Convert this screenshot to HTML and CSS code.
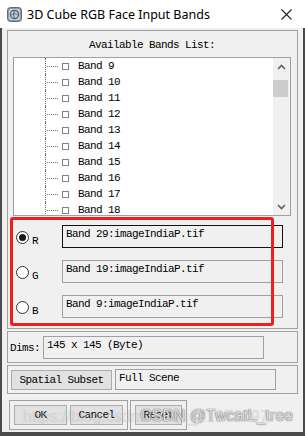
FILE: index.html
```html
<!DOCTYPE html>
<html lang="en">
<head>
    <meta charset="UTF-8">
    <title>3D Cube RGB Face Input Bands</title>
    <link rel="stylesheet" href="styles.css">
</head>
<body>

<div class="window">
    <!-- Title Bar -->
    <div class="titlebar">
        <svg class="app-icon" width="15" height="15" viewBox="0 0 15 15">
            <rect x="0.5" y="0.5" width="14" height="14" rx="3" fill="#8c99a6" stroke="#5d6b78"/>
            <rect x="2" y="2" width="11" height="11" rx="2" fill="#c9d1d9"/>
            <circle cx="7.5" cy="7.5" r="4.2" fill="none" stroke="#55606b" stroke-width="1.2"/>
            <path d="M3.5 8.5 Q7.5 5 11.5 8.5" fill="none" stroke="#55606b" stroke-width="1"/>
            <path d="M7.5 3.3 Q5.5 7.5 7.5 11.7" fill="none" stroke="#55606b" stroke-width="1"/>
        </svg>
        <span class="title">3D Cube RGB Face Input Bands</span>
        <svg class="close" width="13" height="11" viewBox="0 0 13 11">
            <path d="M1.5 0.5 L11.5 10.5 M11.5 0.5 L1.5 10.5" stroke="#222" stroke-width="1.1"/>
        </svg>
    </div>

    <!-- Client Area -->
    <div class="client">
        <div class="frame main-frame">
            <div class="list-title">Available Bands List:</div>

            <div class="listbox">
                <div class="items" id="band-items"></div>
                <div class="scrollbar">
                    <div class="arrow">
                        <svg width="9" height="6" viewBox="0 0 9 6"><path d="M1 5 L4.5 1.5 L8 5" fill="none" stroke="#606060" stroke-width="1.6"/></svg>
                    </div>
                    <div class="track"><div class="thumb"></div></div>
                    <div class="arrow">
                        <svg width="9" height="6" viewBox="0 0 9 6"><path d="M1 1 L4.5 4.5 L8 1" fill="none" stroke="#606060" stroke-width="1.6"/></svg>
                    </div>
                </div>
            </div>

            <div class="rgb">
                <div class="rgb-row">
                    <span class="radio checked"></span>
                    <span class="rgb-label">R</span>
                    <div class="field focused">Band 29:imageIndiaP.tif</div>
                </div>
                <div class="rgb-row">
                    <span class="radio"></span>
                    <span class="rgb-label">G</span>
                    <div class="field">Band 19:imageIndiaP.tif</div>
                </div>
                <div class="rgb-row">
                    <span class="radio"></span>
                    <span class="rgb-label">B</span>
                    <div class="field">Band 9:imageIndiaP.tif</div>
                </div>
                <!-- annotation box drawn over the screenshot -->
                <div class="highlight"></div>
            </div>
        </div>

        <div class="frame dims-frame">
            <span class="dims-label">Dims:</span>
            <div class="field dims-field">145 x 145 (Byte)</div>
        </div>

        <div class="frame subset-frame">
            <button class="btn subset-btn">Spatial Subset</button>
            <div class="field subset-field">Full Scene</div>
        </div>

        <div class="button-row">
            <div class="btn-group">
                <button class="btn">OK</button>
                <button class="btn">Cancel</button>
            </div>
            <div class="btn-group">
                <button class="btn reset-btn">Reset</button>
            </div>
        </div>

        <div class="watermark">
            <span class="wm-url">https://blog.csdn.net/qq_41979797</span>
            <span class="wm-name">CSDN @TwcatL_tree</span>
        </div>
    </div>
</div>

<script>
    // Fill the visible part of the band list
    const items = document.getElementById('band-items');
    for (let i = 9; i <= 18; i++) {
        const row = document.createElement('div');
        row.className = 'item';
        row.innerHTML = '<span class="branch"></span><span class="check"></span><span>Band ' + i + '</span>';
        items.appendChild(row);
    }
</script>

</body>
</html>
```

FILE: styles.css
```css
/* Reset */
*, *::before, *::after {
    margin: 0;
    padding: 0;
    box-sizing: border-box;
}

:root {
    --face: #f0f0f0;
    --line: #a0a0a0;
    --mono: 'Liberation Mono', 'DejaVu Sans Mono', monospace;
}

body {
    width: 305px;
    height: 436px;
    overflow: hidden;
    background: #4a4a4a;
}

.window {
    width: 305px;
    height: 436px;
    display: flex;
    flex-direction: column;
}

/* Title Bar */
.titlebar {
    height: 28px;
    background: #fff;
    display: flex;
    align-items: center;
    padding-left: 7px;
}

.title {
    font-family: 'Noto Sans', sans-serif;
    font-size: 12.5px;
    color: #000;
    margin-left: 5px;
    flex: 1;
}

.close {
    margin-right: 12px;
}

/* Client Area */
.client {
    position: relative;
    flex: 1;
    background: var(--face);
    margin: 0 2px 4px;
    padding: 2px 5px 0;
    display: flex;
    flex-direction: column;
    font-family: var(--mono);
    font-size: 11px;
    letter-spacing: -0.6px;
    color: #000;
}

.frame {
    border: 1px solid var(--line);
}

/* Main frame */
.main-frame {
    height: 299px;
    padding: 0 6px 0 5px;
}

.list-title {
    text-align: center;
    height: 26px;
    line-height: 28px;
}

.listbox {
    height: 159px;
    border: 1px solid var(--line);
    background: #fff;
    display: flex;
}

.items {
    flex: 1;
    overflow: hidden;
    padding-left: 31px;
}

.item {
    height: 16px;
    display: flex;
    align-items: center;
    border-left: 1px dotted #707070;
}

.branch {
    width: 11px;
    border-top: 1px dotted #707070;
    margin-left: 1px;
}

.check {
    width: 7px;
    height: 7px;
    border: 1px solid #808080;
    margin: 0 9px 0 4px;
}

.scrollbar {
    width: 17px;
    background: var(--face);
    display: flex;
    flex-direction: column;
}

.arrow {
    height: 17px;
    display: flex;
    align-items: center;
    justify-content: center;
}

.track {
    flex: 1;
    padding-top: 5px;
}

.thumb {
    height: 17px;
    width: 15px;
    background: #cdcdcd;
}

/* RGB section */
.rgb {
    position: relative;
    margin-top: 9px;
    display: flex;
    flex-direction: column;
    gap: 12px;
    padding-left: 3px;
}

.rgb-row {
    display: flex;
    align-items: center;
    height: 23px;
}

.radio {
    width: 13px;
    height: 13px;
    border: 1px solid #333;
    border-radius: 50%;
    background: #fff;
    margin-top: 2px;
    display: flex;
    align-items: center;
    justify-content: center;
}

.radio.checked::after {
    content: '';
    width: 7px;
    height: 7px;
    border-radius: 50%;
    background: #1a1a1a;
}

.rgb-label {
    width: 33px;
    padding-left: 3px;
    margin-top: 8px;
}

.field {
    border: 1px solid var(--line);
    background: var(--face);
    padding: 2px 0 0 3px;
    white-space: nowrap;
}

.rgb .field {
    width: 221px;
    height: 23px;
}

.field.focused {
    border-color: #111;
}

.highlight {
    position: absolute;
    left: -3px;
    top: -8px;
    width: 264px;
    height: 109px;
    border: 3px solid #f21d1d;
    border-radius: 3px;
}

/* Dims */
.dims-frame {
    margin-top: 2px;
    height: 32px;
    display: flex;
    align-items: center;
    padding-left: 2px;
}

.dims-label {
    width: 33px;
    margin-top: 2px;
}

.dims-field {
    width: 221px;
    height: 23px;
}

/* Spatial subset */
.subset-frame {
    margin-top: 2px;
    height: 29px;
    display: flex;
    align-items: center;
    padding-left: 3px;
    gap: 3px;
}

.btn {
    font-family: var(--mono);
    font-size: 11px;
    letter-spacing: -0.6px;
    background: #e1e1e1;
    border: 1px solid #adadad;
    color: #000;
    height: 20px;
}

.subset-btn {
    width: 101px;
}

.subset-field {
    width: 161px;
    height: 21px;
}

/* Bottom buttons */
.button-row {
    margin-top: 6px;
    display: flex;
    gap: 2px;
    padding-left: 2px;
}

.btn-group {
    border: 1px solid var(--line);
    height: 30px;
    display: flex;
    align-items: center;
    padding: 0 4px;
    gap: 3px;
}

.btn-group .btn {
    width: 53px;
}

.btn-group .reset-btn {
    width: 47px;
}

/* Watermark over the buttons */
.watermark {
    position: absolute;
    left: 21px;
    top: 379px;
    width: 280px;
    height: 24px;
    overflow: hidden;
    font-family: 'Liberation Sans', sans-serif;
    letter-spacing: 0;
    white-space: nowrap;
    pointer-events: none;
}

.wm-url {
    position: absolute;
    left: 0;
    top: 1px;
    font-size: 16px;
    color: rgba(255, 255, 255, 0.3);
    text-shadow: 0 0 1px rgba(110, 110, 110, 0.3);
}

.wm-name {
    position: absolute;
    left: 117px;
    top: 0;
    font-size: 16px;
    color: rgba(255, 255, 255, 0.8);
    text-shadow: 0 0 1px #606060, 0 0 1px #606060;
}
```
